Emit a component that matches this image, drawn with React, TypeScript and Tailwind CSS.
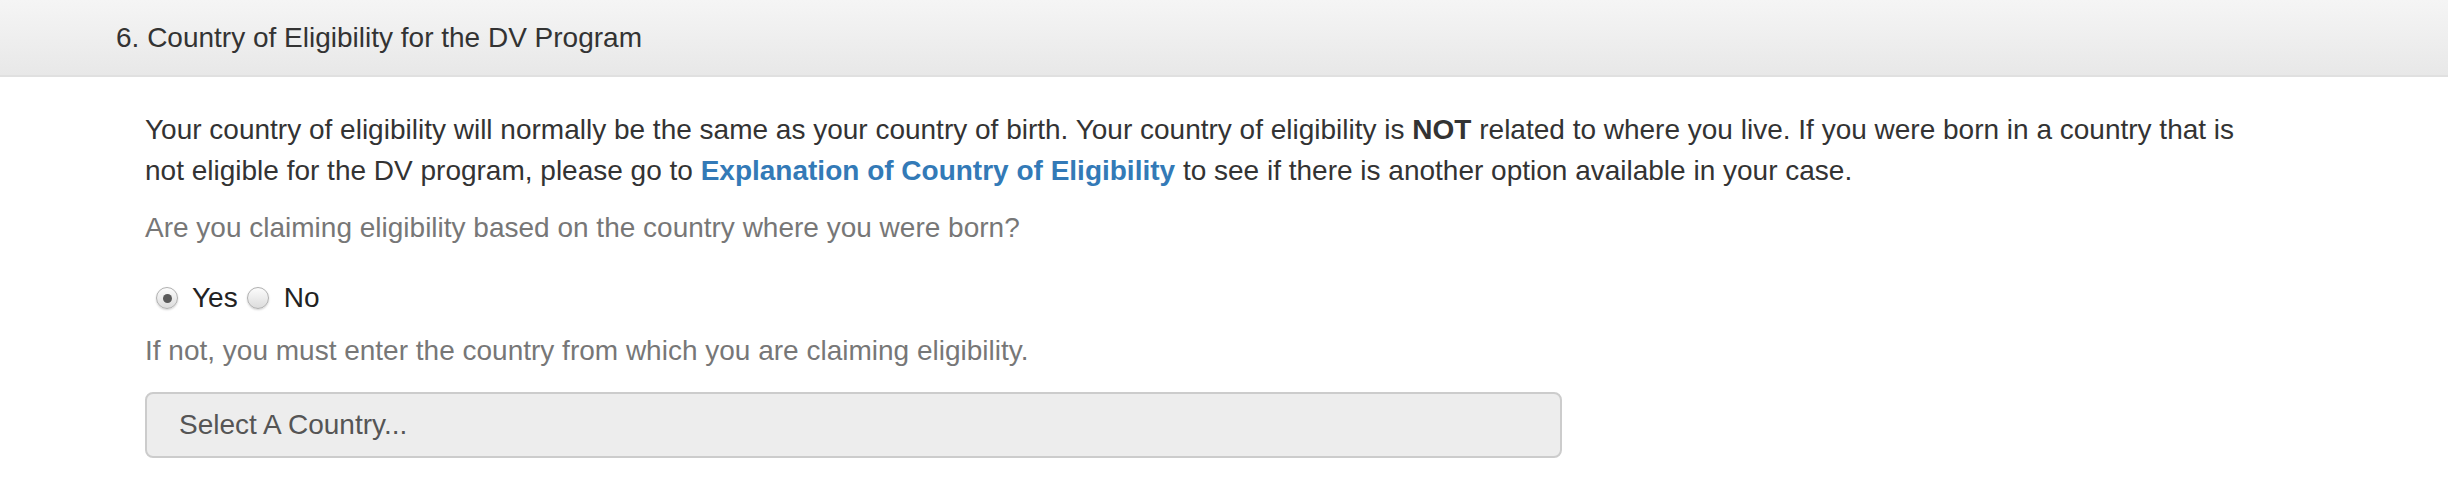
import { useState } from "react";

function Radio({ checked, onClick }: { checked: boolean; onClick: () => void }) {
  return (
    <span
      onClick={onClick}
      className="inline-flex items-center justify-center w-[22px] h-[22px] rounded-full border border-[#b0b0b0] bg-gradient-to-b from-[#fcfcfc] to-[#dcdcdc] shadow-[0_1px_2px_rgba(0,0,0,0.18)] cursor-pointer"
    >
      {checked && <span className="w-[9px] h-[9px] rounded-full bg-[#5a5a5a]" />}
    </span>
  );
}

export default function App() {
  const [born, setBorn] = useState<"yes" | "no">("yes");

  return (
    <div className="w-[2448px] h-[494px] bg-white font-['Liberation_Sans',Arial,sans-serif] text-[28px] leading-[40px] text-[#333]">
      <div className="h-[77px] pl-[116px] flex items-center bg-gradient-to-b from-[#f5f5f5] to-[#e8e8e8] border-b-2 border-[#e0e0e0]">
        <h3 className="text-[28px] text-[#333] pt-[1px]">6. Country of Eligibility for the DV Program</h3>
      </div>

      <div className="pl-[145px] pr-[120px] pt-[32px]">
        <p className="max-w-[2118px] leading-[41px]">
          Your country of eligibility will normally be the same as your country of birth. Your country of
          eligibility is <strong>NOT</strong> related to where you live. If you were born in a country that is
          not eligible for the DV program, please go to{" "}
          <a className="font-bold text-[#337ab7]" href="#">
            Explanation of Country of Eligibility
          </a>{" "}
          to see if there is another option available in your case.
        </p>

        <p className="mt-[17px] text-[#777]">Are you claiming eligibility based on the country where you were born?</p>

        <div className="mt-[30px] flex items-center pl-[11px] text-[#222]">
          <Radio checked={born === "yes"} onClick={() => setBorn("yes")} />
          <span className="ml-[14px] mr-[9px]">Yes</span>
          <Radio checked={born === "no"} onClick={() => setBorn("no")} />
          <span className="ml-[15px]">No</span>
        </div>

        <p className="mt-[13px] text-[#777]">If not, you must enter the country from which you are claiming eligibility.</p>

        <div className="mt-[21px] w-[1417px] h-[66px] rounded-[8px] border-2 border-[#ccc] bg-[#ededed] flex items-center pl-[32px] text-[#555]">
          Select A Country...
        </div>
      </div>
    </div>
  );
}
